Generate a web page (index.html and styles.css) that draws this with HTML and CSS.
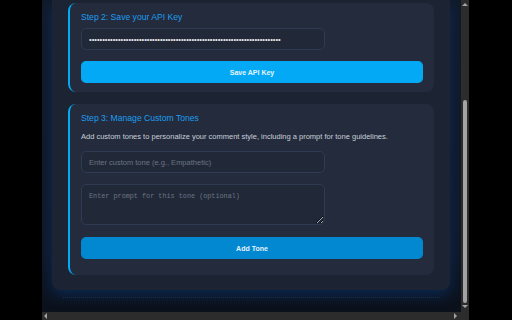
FILE: index.html
```html
<!DOCTYPE html>
<html>
<head>
<meta charset="utf-8">
<link rel="stylesheet" href="styles.css">
</head>
<body>
<div class="window">
  <div class="row">
    <div class="viewport">
      <div class="container">
        <section class="card card-first">
          <h2 class="card-title">Step 2: Save your API Key</h2>
          <input class="field" type="password" value="abcdefghijabcdefghijabcdefghijabcdefghijabcdefghijabcdefghijabcdefghijabc">
          <button class="btn btn-save">Save API Key</button>
        </section>
        <section class="card card-second">
          <h2 class="card-title">Step 3: Manage Custom Tones</h2>
          <p class="card-desc">Add custom tones to personalize your comment style, including a prompt for tone guidelines.</p>
          <input class="field" type="text" placeholder="Enter custom tone (e.g., Empathetic)">
          <textarea class="area" placeholder="Enter prompt for this tone (optional)"></textarea>
          <button class="btn btn-add">Add Tone</button>
        </section>
      </div>
      <div class="footer-line"></div>
    </div>
    <div class="vscroll">
      <div class="arrow-up"></div>
      <div class="vtrack"><div class="vthumb"></div></div>
      <div class="arrow-down"></div>
    </div>
  </div>
  <div class="hscroll">
    <div class="arrow-left"></div>
    <div class="arrow-right"></div>
  </div>
</div>
</body>
</html>
```
FILE: styles.css
```css
html, body {
  margin: 0;
  padding: 0;
  background: #000;
  width: 512px;
  height: 320px;
  overflow: hidden;
  font-family: "Liberation Sans", Arial, sans-serif;
}
.window {
  margin-left: 42px;
  width: 427px;
  height: 320px;
  display: flex;
  flex-direction: column;
}
.row {
  display: flex;
  height: 312px;
}
.viewport {
  width: 419px;
  height: 312px;
  box-sizing: border-box;
  padding: 0 11px 0 10px;
  background: linear-gradient(#111a29 0%, #0f1827 80%, #0b111b 100%);
  overflow: hidden;
}
.container {
  background: #1c2434;
  border-radius: 0 0 8px 8px;
  padding: 3px 16px 15px;
  display: flex;
  flex-direction: column;
  gap: 12px;
  box-shadow: 0 5px 14px rgba(10, 60, 130, 0.5);
}
.card {
  background: #232b3c;
  border-left: 2px solid #03a9f4;
  border-radius: 8px;
  padding: 9px 11px 16px;
  display: flex;
  flex-direction: column;
}
.card-first { padding-bottom: 9px; }
.card-title {
  margin: 0;
  font-size: 8.6px;
  line-height: 11px;
  font-weight: normal;
  color: #1e9df0;
}
.card-first .card-title { margin-bottom: 5px; }
.card-second .card-title { margin-bottom: 8px; }
.card-desc {
  margin: 0 0 10px;
  font-size: 7.5px;
  line-height: 9px;
  color: #c8d0da;
}
.field {
  width: 244px;
  height: 22px;
  box-sizing: border-box;
  background: #212939;
  border: 1px solid #2f3b52;
  border-radius: 5px;
  padding: 0 7px;
  font-family: "Liberation Sans", Arial, sans-serif;
  font-size: 7.5px;
  color: #e5e7eb;
  outline: none;
}
.field::placeholder { color: #6b7483; }
.area {
  margin-top: 11px;
  width: 244px;
  height: 41px;
  box-sizing: border-box;
  background: #212939;
  border: 1px solid #2f3b52;
  border-radius: 5px;
  padding: 7px 7px;
  font-family: "Liberation Mono", monospace;
  font-size: 6.8px;
  color: #e5e7eb;
  outline: none;
}
.area::placeholder { color: #6b7483; }
.btn {
  margin-top: 11px;
  height: 22px;
  border: none;
  border-radius: 5px;
  color: #e6f3fb;
  font-family: "Liberation Sans", Arial, sans-serif;
  font-size: 7px;
  font-weight: bold;
  padding: 0;
}
.btn-save { background: #03a9f4; }
.btn-add { background: #0288d1; margin-top: 12px; }
.footer-line {
  margin: 7px 10px 0 11px;
  border-top: 1px dotted rgba(90, 120, 160, 0.2);
}
.vscroll {
  width: 8px;
  height: 312px;
  background: #2c2c2c;
  display: flex;
  flex-direction: column;
  align-items: center;
}
.arrow-up {
  margin-top: 3px;
  width: 0;
  height: 0;
  border-left: 3px solid transparent;
  border-right: 3px solid transparent;
  border-bottom: 3px solid #a3a3a3;
}
.vtrack {
  flex: 1;
  width: 100%;
  display: flex;
  flex-direction: column;
  align-items: center;
}
.vthumb {
  margin-top: 94px;
  width: 4px;
  height: 203px;
  background: #a3a3a3;
  border-radius: 2px;
}
.arrow-down {
  margin-bottom: 4px;
  margin-top: 2px;
  width: 0;
  height: 0;
  border-left: 3px solid transparent;
  border-right: 3px solid transparent;
  border-top: 3px solid #a3a3a3;
}
.hscroll {
  height: 8px;
  background: #2c2c2c;
  display: flex;
  justify-content: space-between;
  align-items: center;
  padding: 0 12px 0 2px;
}
.arrow-left {
  width: 0;
  height: 0;
  border-top: 3px solid transparent;
  border-bottom: 3px solid transparent;
  border-right: 3px solid #a3a3a3;
}
.arrow-right {
  width: 0;
  height: 0;
  border-top: 3px solid transparent;
  border-bottom: 3px solid transparent;
  border-left: 3px solid #a3a3a3;
}
```
